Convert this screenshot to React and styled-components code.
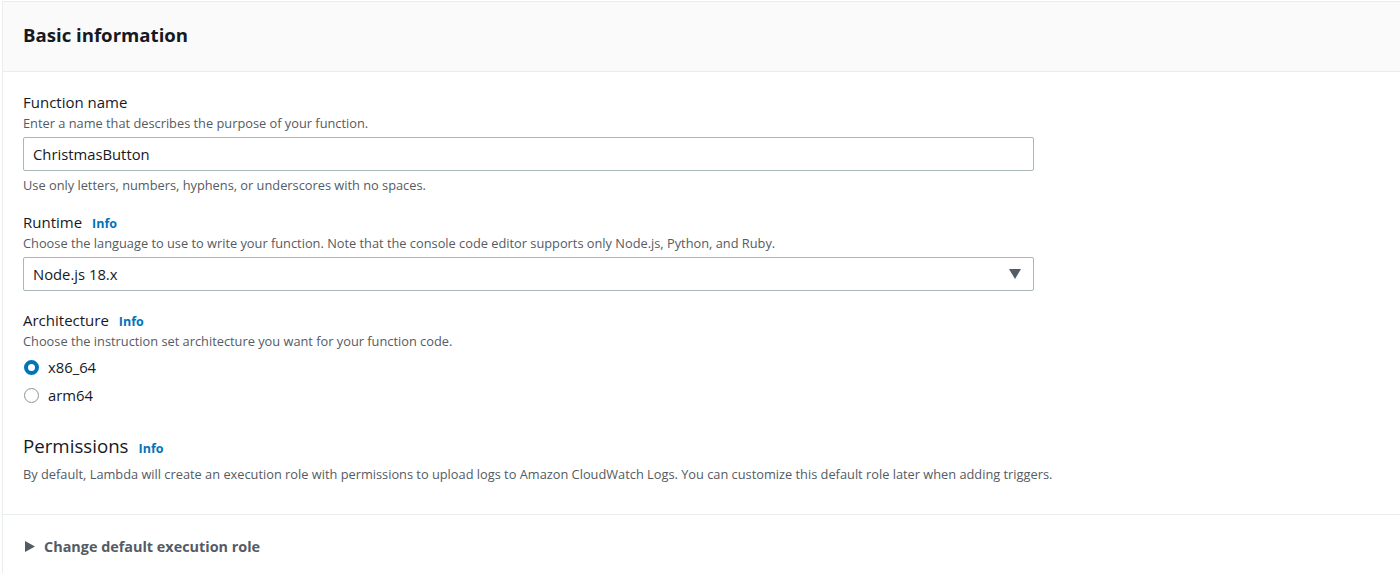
import React from "react";
import styled, { createGlobalStyle } from "styled-components";

const Global = createGlobalStyle`
  html, body { margin: 0; padding: 0; background: #ffffff; }
  body { font-family: "Open Sans", "Noto Sans", Arial, sans-serif; color: #16191f; }
  * { box-sizing: border-box; }
`;

const Card = styled.div`
  margin-left: 2px;
  margin-top: 1px;
  border-left: 1px solid #eaeded;
  border-top: 1px solid #eaeded;
  width: 1398px;
  height: 572px;
  overflow: hidden;
  background: #fff;
`;

const Header = styled.div`
  height: 70px;
  background: #fafafa;
  border-bottom: 1px solid #eaeded;
  display: flex;
  align-items: center;
  padding: 0 0 4px 20px;
`;

const Title = styled.h2`
  margin: 0;
  font-size: 18.6px;
  font-weight: 700;
  color: #16191f;
`;

const Body = styled.div`
  padding: 20px 20px 0 20px;
  display: flex;
  flex-direction: column;
`;

const Field = styled.div`
  display: flex;
  flex-direction: column;
  margin-bottom: ${(p) => p.$mb || 0}px;
`;

const LabelRow = styled.div`
  display: flex;
  align-items: baseline;
  gap: 10px;
  height: ${(p) => p.$h || 21}px;
  line-height: ${(p) => p.$h || 21}px;
`;

const Label = styled.span`
  font-size: 15px;
  color: #16191f;
`;

const Heading = styled.span`
  font-size: 18.7px;
  color: #16191f;
`;

const Info = styled.a`
  font-size: 12.5px;
  font-weight: 700;
  color: #0073bb;
  text-decoration: none;
`;

const Desc = styled.div`
  font-size: 12.8px;
  color: #545b64;
  line-height: 20px;
  margin-top: ${(p) => p.$mt || 0}px;
`;

const Input = styled.div`
  margin-top: 4px;
  width: 1011px;
  height: 34px;
  border: 1px solid #aab7b8;
  border-radius: 2px;
  display: flex;
  align-items: center;
  justify-content: space-between;
  padding: 0 10px 0 9px;
  font-size: 14.8px;
  color: #16191f;
`;

const Arrow = styled.svg`
  width: 12px;
  height: 10px;
  margin-right: 2px;
`;

const Radios = styled.div`
  display: flex;
  flex-direction: column;
  gap: 8px;
  margin-top: 6px;
`;

const RadioRow = styled.label`
  display: flex;
  align-items: center;
  gap: 9px;
  height: 20px;
  font-size: 14.8px;
  color: #16191f;
`;

const Dot = styled.span`
  width: 15px;
  height: 15px;
  border-radius: 50%;
  margin-left: 1px;
  border: ${(p) => (p.$on ? "4px solid #0073bb" : "1.5px solid #879596")};
  background: #fff;
`;

const Divider = styled.div`
  height: 1px;
  background: #eaeded;
  margin: 0 -20px;
`;

const Expander = styled.div`
  display: flex;
  align-items: center;
  gap: 9px;
  height: 62px;
  padding-left: 2px;
  font-size: 14.4px;
  font-weight: 700;
  color: #545b64;
`;

export default function App() {
  return (
    <>
      <Global />
      <Card>
        <Header>
          <Title>Basic information</Title>
        </Header>
        <Body>
          <Field $mb={17}>
            <LabelRow><Label>Function name</Label></LabelRow>
            <Desc>Enter a name that describes the purpose of your function.</Desc>
            <Input>ChristmasButton</Input>
            <Desc $mt={4}>Use only letters, numbers, hyphens, or underscores with no spaces.</Desc>
          </Field>
          <Field $mb={19}>
            <LabelRow><Label>Runtime</Label><Info>Info</Info></LabelRow>
            <Desc>Choose the language to use to write your function. Note that the console code editor supports only Node.js, Python, and Ruby.</Desc>
            <Input>
              Node.js 18.x
              <Arrow viewBox="0 0 12 10"><path d="M0 0 H12 L6 10 Z" fill="#545b64" /></Arrow>
            </Input>
          </Field>
          <Field $mb={28}>
            <LabelRow><Label>Architecture</Label><Info>Info</Info></LabelRow>
            <Desc>Choose the instruction set architecture you want for your function code.</Desc>
            <Radios>
              <RadioRow><Dot $on />x86_64</RadioRow>
              <RadioRow><Dot />arm64</RadioRow>
            </Radios>
          </Field>
          <Field $mb={30}>
            <LabelRow $h={26}><Heading>Permissions</Heading><Info>Info</Info></LabelRow>
            <Desc $mt={5}>By default, Lambda will create an execution role with permissions to upload logs to Amazon CloudWatch Logs. You can customize this default role later when adding triggers.</Desc>
          </Field>
          <Divider />
          <Expander>
            <svg width="10" height="11" viewBox="0 0 10 11"><path d="M0 0 L10 5.5 L0 11 Z" fill="#545b64" /></svg>
            Change default execution role
          </Expander>
        </Body>
      </Card>
    </>
  );
}
